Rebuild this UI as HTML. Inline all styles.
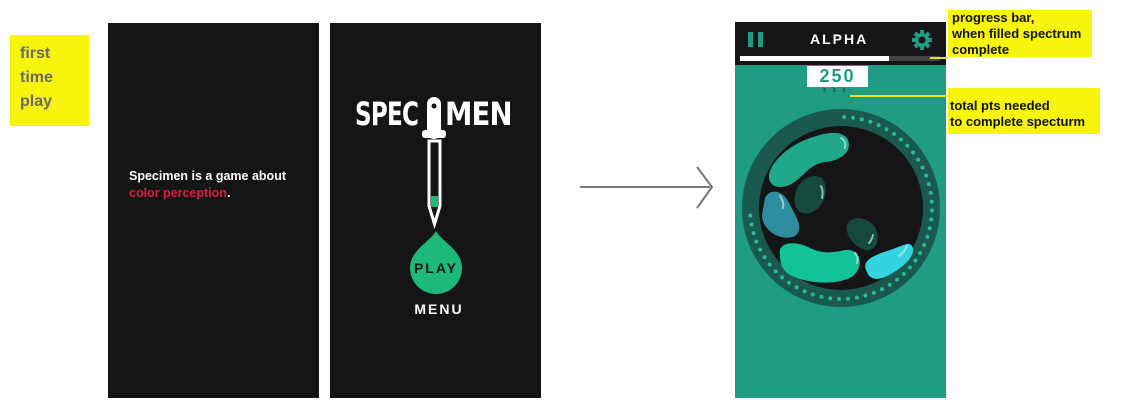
<!DOCTYPE html>
<html><head><style>
body{margin:0;width:1124px;height:405px;background:#fff;position:relative;overflow:hidden;font-family:"Liberation Sans",sans-serif;}
.a{position:absolute}
.y{background:#f8f50c;font-weight:bold;color:#111;font-size:13px;line-height:16px}
.lg{position:absolute;top:96px;color:#fff;font-weight:900;font-size:32px;font-family:'DejaVu Sans',sans-serif;transform:scaleX(0.72);transform-origin:left;letter-spacing:-1px;line-height:36px}
</style></head><body>
<div class="a y" style="left:10px;top:35px;width:79px;height:91px;color:#6a6a6a;font-size:16px;line-height:24px;padding:0;"><div style="padding:7px 0 0 10px">first<br>time<br>play</div></div>
<div class="a" style="left:108px;top:23px;width:211px;height:375px;background:#151517"></div>
<div class="a" style="left:129px;top:168px;color:#fff;font-weight:bold;font-size:12.5px;line-height:17px">Specimen is a game about<br><span style="color:#e21b3c">color perception</span>.</div>
<div class="a" style="left:330px;top:23px;width:211px;height:375px;background:#151517"></div>
<div class="lg" style="left:355px">SPEC</div>
<div class="lg" style="left:445px;transform:scaleX(0.86)">MEN</div>
<svg class="a" style="left:330px;top:80px" width="211" height="240">
<rect x="97" y="17" width="14" height="42" rx="7" fill="#fff"/>
<circle cx="104" cy="26" r="2.5" fill="#151517"/>
<rect x="92" y="50" width="24" height="8" rx="3" fill="#fff"/>
<path d="M99 61 H110 V126 L104.5 144 L99 126 Z" fill="none" stroke="#fff" stroke-width="3"/>
<rect x="101" y="116" width="7" height="11" fill="#1db97a"/>
<path d="M106 151 C112 162 132 170 132 188 A26 26 0 0 1 80 188 C80 170 100 162 106 151Z" fill="#1db97a"/>
<text x="106" y="193" text-anchor="middle" font-weight="bold" font-size="14" letter-spacing="2" fill="#151517">PLAY</text>
<text x="109" y="234" text-anchor="middle" font-weight="bold" font-size="14" letter-spacing="2" fill="#fff">MENU</text>
</svg>
<svg class="a" style="left:575px;top:160px" width="145" height="55"><path d="M5 27 H135 M122 7 L137 27 L122 48" fill="none" stroke="#777" stroke-width="2"/></svg>
<div class="a" style="left:735px;top:22px;width:211px;height:376px;background:#1f9c82"></div>
<div class="a" style="left:735px;top:22px;width:211px;height:43px;background:#151517"></div>
<div class="a" style="left:748px;top:32px;width:5px;height:15px;background:#1f9c82"></div>
<div class="a" style="left:758px;top:32px;width:5px;height:15px;background:#1f9c82"></div>
<div class="a" style="left:810px;top:31px;color:#fff;font-weight:bold;font-size:14px;letter-spacing:2px">ALPHA</div>
<svg class="a" style="left:911px;top:29px" width="22" height="22"><g fill="#1f9c82"><circle cx="11" cy="11" r="7"/><rect x="9" y="1" width="4" height="20"/><rect x="1" y="9" width="20" height="4"/><rect x="9" y="1" width="4" height="20" transform="rotate(45 11 11)"/><rect x="9" y="1" width="4" height="20" transform="rotate(-45 11 11)"/></g><circle cx="11" cy="11" r="3.5" fill="#151517"/></svg>
<div class="a" style="left:740px;top:56px;width:200px;height:5px;background:#444"></div>
<div class="a" style="left:740px;top:56px;width:149px;height:5px;background:#fff"></div>
<div class="a" style="left:807px;top:66px;width:61px;height:21px;background:#fff;color:#1f9c82;font-weight:bold;font-size:18px;text-align:center;line-height:21px;letter-spacing:2px">250</div>
<div class="a" style="left:823px;top:88px;color:#222;font-size:5px;letter-spacing:7px">330</div>
<svg class="a" style="left:735px;top:100px" width="212" height="220">
<circle cx="106" cy="108" r="99" fill="#1a5a4e"/>
<circle cx="106" cy="108" r="82" fill="#151517"/>
<g fill="#2fb79a" id="d"></g>
<path d="M38 85 C25 75 45 50 70 40 C90 32 105 30 112 38 C118 48 110 60 90 62 C75 64 70 75 58 83 C50 88 42 88 38 85Z" fill="#1fa88a"/>
<path d="M30 98 C35 88 48 90 54 103 C60 115 70 128 60 136 C45 142 27 130 27 115 Z" fill="#2e8e9f"/>
<path d="M60 95 C62 80 78 72 87 78 C95 88 90 108 75 113 C62 116 58 105 60 95Z" fill="#174a3c"/>
<path d="M112 125 C116 115 132 116 140 127 C147 140 140 152 130 150 C118 146 110 134 112 125Z" fill="#174a3c"/>
<path d="M45 155 C42 142 60 140 75 148 C90 155 100 152 110 150 C125 148 130 165 118 176 C105 185 75 185 55 175 C47 170 45 163 45 155Z" fill="#14c29a"/>
<path d="M132 172 C125 160 140 155 155 150 C168 146 175 140 178 148 C180 158 165 170 150 177 C140 181 134 178 132 172Z" fill="#34d3df"/>
<g fill="none" stroke="#bfeee5" stroke-width="2" stroke-linecap="round" opacity="0.7"><path d="M106 38 C110 40 111 44 110 48"/><path d="M45 96 C48 100 49 104 48 108"/><path d="M86 86 C88 90 88 94 87 98"/><path d="M138 135 C137 139 136 141 134 143"/><path d="M120 153 C123 156 123 160 122 163"/><path d="M172 146 C170 151 167 154 164 156"/></g>
</svg>
<script>
var g=document.getElementById('d'),s='';
for(var i=0;i<48;i++){var a=(-88+i*5.6)*Math.PI/180;s+='<circle cx="'+(106+91*Math.cos(a))+'" cy="'+(108+91*Math.sin(a))+'" r="2"/>';}
g.innerHTML=s;
</script>
<div class="a" style="left:930px;top:57px;width:18px;height:2px;background:#e8e020"></div>
<div class="a" style="left:850px;top:95px;width:100px;height:2px;background:#e8e020"></div>
<div class="a y" style="left:948px;top:10px;width:144px;height:47px;padding-left:4px;box-sizing:border-box">progress bar,<br>when filled spectrum<br>complete</div>
<div class="a y" style="left:948px;top:88px;width:152px;height:46px;padding:10px 0 0 2px;box-sizing:border-box">total pts needed<br>to complete specturm</div>
</body></html>
